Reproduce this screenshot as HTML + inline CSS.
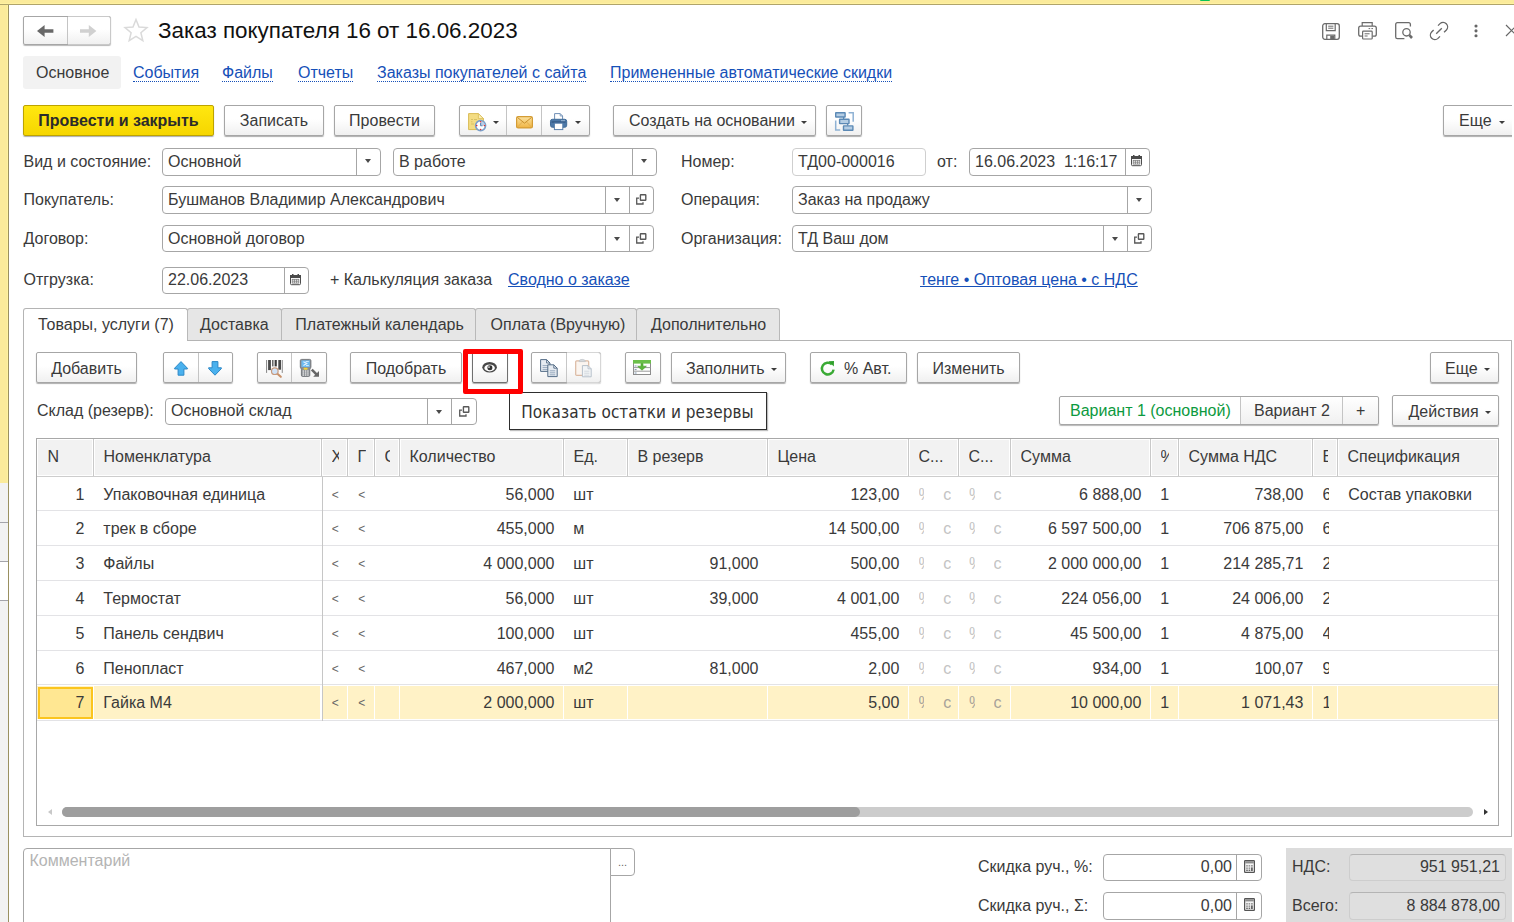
<!DOCTYPE html><html lang="ru"><head><meta charset="utf-8"><title>Заказ покупателя 16 от 16.06.2023</title><style>
*{box-sizing:border-box;margin:0;padding:0}
html,body{width:1514px;height:922px;overflow:hidden;background:#fff}
body{font-family:"Liberation Sans",Arial,sans-serif;font-size:16px;color:#3a3a3a;position:relative}
.a{position:absolute;white-space:nowrap}
.t{position:absolute;white-space:nowrap;line-height:20px;height:20px}
.btn{position:absolute;border:1px solid #a6a6a6;border-radius:2px;background:linear-gradient(#fff 0%,#fff 45%,#f0f0f0 100%);box-shadow:0 1px 1px rgba(0,0,0,.32);text-align:center;white-space:nowrap;color:#3a3a3a}
.btn.y{background:linear-gradient(#ffe710,#f6d600);border-color:#bda300;font-weight:bold;color:#2b2b2b}
.grp{position:absolute;border:1px solid #a6a6a6;border-radius:2px;background:linear-gradient(#fff 0%,#fff 45%,#f0f0f0 100%);box-shadow:0 1px 1px rgba(0,0,0,.28)}
.sep{position:absolute;top:0;bottom:0;width:1px;background:#c4c4c4}
.inp{position:absolute;border:1px solid #a6a6a6;border-radius:4px;background:#fff;white-space:nowrap;overflow:hidden}
.inp .v{position:absolute;left:5px;top:3px;line-height:20px}
.inp .s{position:absolute;top:0;bottom:0;width:1px;background:#a6a6a6}
.lnk{color:#1650b8}
.dot{border-bottom:1px dotted #1650b8}
.car{position:absolute;width:0;height:0;border-left:3.25px solid transparent;border-right:3.25px solid transparent;border-top:4px solid #4a4a4a}
.carb{position:absolute;width:0;height:0;border-left:3px solid transparent;border-right:3px solid transparent;border-top:3px solid #3c3c3c}
svg{position:absolute;overflow:visible}
</style></head><body>
<div class="a" style="left:0;top:0;width:1514px;height:3px;background:#fbeb9b"></div>
<div class="a" style="left:0;top:3px;width:1514px;height:1px;background:#fff1a0"></div>
<div class="a" style="left:0;top:4px;width:1514px;height:1px;background:#b0a46a"></div>
<div class="a" style="left:0;top:5px;width:7px;height:478px;background:#fbeb9b"></div>
<div class="a" style="left:7px;top:5px;width:1px;height:478px;background:#fff3a0"></div>
<div class="a" style="left:0;top:483px;width:8px;height:439px;background:#f2f2f2"></div>
<div class="a" style="left:0;top:562px;width:8px;height:38px;background:#fff"></div>
<div class="a" style="left:0;top:522px;width:8px;height:1px;background:#a4a4aa"></div>
<div class="a" style="left:0;top:561px;width:8px;height:1px;background:#a4a4aa"></div>
<div class="a" style="left:0;top:600px;width:8px;height:1px;background:#a4a4aa"></div>
<div class="a" style="left:8px;top:5px;width:1px;height:917px;background:#9a9060"></div>
<div class="a" style="left:1199.5px;top:0;width:10px;height:1.2px;background:#08c456;border-radius:0 0 4px 4px"></div>
<div class="grp" style="left:23px;top:16px;width:88px;height:29px"><i class="sep" style="left:43px"></i><svg width="16" height="12" style="left:13px;top:8px" viewBox="0 0 16 12"><path d="M0 6 L7.6 0 L7.6 4.3 L16.4 4.3 L16.4 7.7 L7.6 7.7 L7.6 12 Z" fill="#686868"/></svg><svg width="16" height="12" style="left:56px;top:8px" viewBox="0 0 16 12"><path d="M16.4 6 L8.8 0 L8.8 4.3 L0 4.3 L0 7.7 L8.8 7.7 L8.8 12 Z" fill="#d0d0d0"/></svg></div>
<div class="a" style="left:68px;top:16px;width:43px;height:29px;border:1px solid #c9c9c9;border-left:none;border-radius:0 2.5px 2.5px 0"></div>
<svg width="24" height="24" style="left:124px;top:18px" viewBox="0 0 24 24"><path d="M12 1.5 L15 9 L23 9.6 L16.9 14.8 L18.8 22.6 L12 18.4 L5.2 22.6 L7.1 14.8 L1 9.6 L9 9 Z" fill="#fff" stroke="#dadada" stroke-width="1.5" stroke-linejoin="miter"/></svg>
<div class="a" style="left:158px;top:18px;font-size:22.4px;line-height:26px;color:#111">Заказ покупателя 16 от 16.06.2023</div>
<svg width="18" height="17" viewBox="0 0 18 17" style="left:1322px;top:23px"><rect x="0.7" y="0.7" width="16.6" height="15.6" rx="2.2" fill="none" stroke="#6b6b6b" stroke-width="1.3"/><path d="M4.3 0.8 V7.6 H13.2 V0.8" fill="none" stroke="#6b6b6b" stroke-width="1.2"/><path d="M6.2 3.2 H11.4 M6.2 5.2 H11.4" stroke="#6b6b6b" stroke-width="1"/><path d="M4.8 16.2 V12.2 H12.8 V16.2" fill="none" stroke="#6b6b6b" stroke-width="1.2"/><rect x="8.2" y="12.8" width="4" height="3.4" fill="#6b6b6b"/></svg><svg width="18.5" height="17.6" viewBox="0 0 18.5 17.6" style="left:1358px;top:22.2px"><path d="M4.2 4 V0.7 H14.2 V4" fill="none" stroke="#6b6b6b" stroke-width="1.2"/><path d="M4.6 14.2 H2.6 Q0.7 14.2 0.7 12.2 V6.2 Q0.7 4.2 2.6 4.2 H16.4 Q18.3 4.2 18.3 6.2 V12.2 Q18.3 14.2 16.4 14.2 H14.4" fill="none" stroke="#6b6b6b" stroke-width="1.3"/><rect x="4.6" y="9.2" width="9.6" height="7.8" rx="0.8" fill="#fff" stroke="#6b6b6b" stroke-width="1.2"/><path d="M6.6 11.8 H11.6" stroke="#6b6b6b" stroke-width="1"/><path d="M6.6 14 H9.6" stroke="#6b6b6b" stroke-width="1"/><path d="M10.6 6.6 H12.2 M13.4 6.6 H15" stroke="#6b6b6b" stroke-width="1"/></svg><svg width="18" height="17.6" viewBox="0 0 18 17.6" style="left:1395px;top:22.2px"><path d="M15.4 4.6 V2.4 Q15.4 0.7 13.7 0.7 H2.4 Q0.7 0.7 0.7 2.4 V15 Q0.7 16.7 2.4 16.7 H9.4" fill="none" stroke="#6b6b6b" stroke-width="1.3"/><circle cx="11.5" cy="10.3" r="3.7" fill="#fff" stroke="#6b6b6b" stroke-width="1.3"/><path d="M14.4 13.2 L17 16" stroke="#6b6b6b" stroke-width="2.6" stroke-linecap="butt"/></svg><svg width="18" height="18" viewBox="0 0 18 18" style="left:1430px;top:22px"><g fill="none" stroke="#686868" stroke-width="1.35" stroke-linecap="butt"><path d="M8.02 3.62 L10.02 1.62 A4.5 4.5 0 0 1 16.38 7.98 L14.08 10.28"/><path d="M3.62 8.02 L1.62 10.02 A4.5 4.5 0 0 0 7.98 16.38 L9.98 14.38"/><path d="M6.2 11.7 L11.8 6.2"/></g></svg><svg width="4" height="14" viewBox="0 0 4 14" style="left:1473.5px;top:23.6px"><circle cx="2" cy="2" r="1.55" fill="#666"/><circle cx="2" cy="6.85" r="1.55" fill="#666"/><circle cx="2" cy="11.7" r="1.55" fill="#666"/></svg><svg width="11" height="11" viewBox="0 0 11 11" style="left:1506px;top:25px"><path d="M0 0 L11 11 M11 0 L0 11" stroke="#666" stroke-width="1.2"/></svg>
<div class="a" style="left:23px;top:56px;width:98px;height:33px;background:#f2f2f2;border-radius:3px"></div>
<div class="t " style="left:36px;top:63px;">Основное</div>
<div class="t " style="left:133px;top:63px;"><span class="lnk dot">События</span></div>
<div class="t " style="left:222px;top:63px;"><span class="lnk dot">Файлы</span></div>
<div class="t " style="left:298px;top:63px;"><span class="lnk dot">Отчеты</span></div>
<div class="t " style="left:377px;top:63px;"><span class="lnk dot">Заказы покупателей с сайта</span></div>
<div class="t " style="left:610px;top:63px;"><span class="lnk dot">Примененные автоматические скидки</span></div>
<div class="btn y" style="left:23px;top:105px;width:191px;height:31px;line-height:29px;">Провести и закрыть</div>
<div class="btn " style="left:224px;top:105px;width:100px;height:31px;line-height:29px;">Записать</div>
<div class="btn " style="left:334px;top:105px;width:101px;height:31px;line-height:29px;">Провести</div>
<div class="grp" style="left:459px;top:105px;width:131px;height:31px"><i class="sep" style="left:46px"></i><i class="sep" style="left:81px"></i><i class="carb" style="left:33px;top:15px"></i><i class="carb" style="left:115px;top:15px"></i><svg width="18" height="18" viewBox="0 0 18 18" style="left:8px;top:7.2px"><path d="M0.6 0.6 H10.4 L15.4 5.6 V16.6 H0.6 Z" fill="#f3dc83" stroke="#d9bb55" stroke-width="1"/><path d="M10.4 0.6 V5.6 H15.4 Z" fill="#fbefb8" stroke="#d9bb55" stroke-width="0.8"/><path d="M3 6.5h2M6 6.5h3M3 8.8h1.5M3 11h3" stroke="#d5bd62" stroke-width="0.9"/><circle cx="12.6" cy="12.6" r="5" fill="#fff" stroke="#7a9fca" stroke-width="1.6"/><path d="M12.6 12.6 V8.4 A4.2 4.2 0 0 1 16.8 12.6 Z" fill="#b9cde6"/><path d="M12.6 12.8 V10 M12.6 12.8 H14.6" stroke="#5c84b5" stroke-width="1.1" fill="none"/><circle cx="12.6" cy="8.7" r="0.8" fill="#e03030"/><circle cx="12.6" cy="16.5" r="0.8" fill="#e03030"/><circle cx="8.7" cy="12.6" r="0.8" fill="#e03030"/><circle cx="16.5" cy="12.6" r="0.8" fill="#e03030"/></svg><svg width="17" height="12.5" viewBox="0 0 17 12.5" style="left:56.3px;top:9.5px"><defs><linearGradient id="mg" x1="0" y1="0" x2="0" y2="1"><stop offset="0" stop-color="#fbe2a0"/><stop offset="1" stop-color="#f0b442"/></linearGradient></defs><rect x="0.6" y="0.6" width="15.8" height="11.3" rx="1.5" fill="url(#mg)" stroke="#d49c34" stroke-width="1.2"/><path d="M1.4 1.4 L8.5 7.2 L15.6 1.4" fill="none" stroke="#c98f2b" stroke-width="1"/><path d="M1.4 11.2 L6.4 6 M15.6 11.2 L10.6 6" fill="none" stroke="#e0ab4a" stroke-width="0.9"/></svg><svg width="17.2" height="17.2" viewBox="0 0 17.2 17.2" style="left:89.8px;top:7.2px"><path d="M4.6 6.4 V0.6 H10.2 L12.6 3 V6.4" fill="#fff" stroke="#6f8fb5" stroke-width="1"/><path d="M10.2 0.6 V3 H12.6" fill="none" stroke="#6f8fb5" stroke-width="0.8"/><rect x="0.5" y="6.3" width="16.2" height="8" rx="2" fill="#4c78a8" stroke="#3f6a98" stroke-width="1"/><rect x="1.6" y="8.4" width="14" height="1.2" fill="#2f557f"/><rect x="11.4" y="7.2" width="1.2" height="1" fill="#cfe0f2"/><rect x="13.4" y="7.2" width="1.2" height="1" fill="#cfe0f2"/><rect x="4.4" y="10.2" width="8.4" height="6.4" fill="#fff" stroke="#5a80ad" stroke-width="1"/></svg></div>
<div class="btn " style="left:613px;top:105px;width:203px;height:31px;line-height:29px;text-align:left;padding-left:15px">Создать на основании<i class="carb" style="left:187px;top:15px"></i></div>
<div class="btn " style="left:826px;top:105px;width:36px;height:31px;line-height:29px;"><svg width="19" height="19" viewBox="0 0 19 19" style="left:8.2px;top:6.2px"><path d="M13.6 0.7 H18.2 V9.8" fill="none" stroke="#8fb2d4" stroke-width="1.5"/><path d="M0.7 8.4 V18 H5.2" fill="none" stroke="#8fb2d4" stroke-width="1.5"/><path d="M8.6 5 V7 M12.6 11.6 V13.6" stroke="#5b89b5" stroke-width="1.3"/><rect x="0.7" y="0.7" width="9.4" height="4.3" rx="0.3" fill="#b4cde4" stroke="#5b89b5" stroke-width="1.4"/><rect x="4.6" y="7.3" width="9.4" height="4.3" rx="0.3" fill="#b4cde4" stroke="#5b89b5" stroke-width="1.4"/><rect x="8.5" y="13.9" width="9.4" height="4.3" rx="0.3" fill="#b4cde4" stroke="#5b89b5" stroke-width="1.4"/></svg></div>
<div class="btn " style="left:1443px;top:105px;width:80px;height:31px;line-height:29px;text-align:left;padding-left:15px">Еще<i class="carb" style="left:55px;top:15px"></i></div>
<div class="a" style="left:1512px;top:95px;width:2px;height:827px;background:#fff"></div>
<div class="t " style="left:23.5px;top:152px;">Вид и состояние:</div>
<div class="inp" style="left:162px;top:148px;width:219px;height:28px;"><span class="v" style="">Основной</span><i class="s" style="left:193px"></i><i class="car" style="left:202.25px;top:10px"></i></div>
<div class="inp" style="left:393px;top:148px;width:264px;height:28px;"><span class="v" style="">В работе</span><i class="s" style="left:238px"></i><i class="car" style="left:247.25px;top:10px"></i></div>
<div class="t " style="left:681px;top:152px;">Номер:</div>
<div class="inp" style="left:792px;top:148px;width:134px;height:28px;border-color:#cfcfcf"><span class="v" style="">ТД00-000016</span></div>
<div class="t " style="left:937px;top:152px;">от:</div>
<div class="inp" style="left:969px;top:148px;width:181px;height:28px;"><span class="v" style="">16.06.2023&nbsp; 1:16:17</span><i class="s" style="left:155px"></i><svg width="11" height="11.2" viewBox="0 0 11 11.2" style="left:160.7px;top:5.8px"><rect x="0.5" y="1.5" width="10" height="9.2" rx="1" fill="#fff" stroke="#4a4a4a"/><rect x="0" y="1" width="11" height="3" fill="#4a4a4a"/><rect x="2" y="0" width="1.5" height="2" fill="#4a4a4a"/><rect x="7.5" y="0" width="1.5" height="2" fill="#4a4a4a"/><rect x="2.2" y="5.3" width="6.6" height="3.8" fill="none" stroke="#7a7a7a" stroke-width="0.8"/><path d="M4.4 5.3v3.8M6.6 5.3v3.8M2.2 7.2h6.6" stroke="#7a7a7a" stroke-width="0.8" fill="none"/></svg></div>
<div class="t " style="left:23.5px;top:190px;">Покупатель:</div>
<div class="inp" style="left:162px;top:186px;width:492px;height:28px;"><span class="v" style="">Бушманов Владимир Александрович</span><i class="s" style="left:442px"></i><i class="car" style="left:451.25px;top:11px"></i><i class="s" style="left:466px"></i><svg width="10.5" height="10.7" viewBox="0 0 10.5 10.7" style="left:473.2px;top:7px"><path d="M3 4.1 H0.7 V10 H7 V8.2" fill="none" stroke="#585858" stroke-width="1.3"/><rect x="4.4" y="0.7" width="5.4" height="5.6" rx="0.5" fill="none" stroke="#585858" stroke-width="1.4"/></svg></div>
<div class="t " style="left:681px;top:190px;">Операция:</div>
<div class="inp" style="left:792px;top:186px;width:360px;height:28px;"><span class="v" style="">Заказ на продажу</span><i class="s" style="left:334px"></i><i class="car" style="left:343.25px;top:11px"></i></div>
<div class="t " style="left:23.5px;top:229px;">Договор:</div>
<div class="inp" style="left:162px;top:225px;width:492px;height:27px;"><span class="v" style="">Основной договор</span><i class="s" style="left:442px"></i><i class="car" style="left:451.25px;top:11px"></i><i class="s" style="left:466px"></i><svg width="10.5" height="10.7" viewBox="0 0 10.5 10.7" style="left:473.2px;top:7px"><path d="M3 4.1 H0.7 V10 H7 V8.2" fill="none" stroke="#585858" stroke-width="1.3"/><rect x="4.4" y="0.7" width="5.4" height="5.6" rx="0.5" fill="none" stroke="#585858" stroke-width="1.4"/></svg></div>
<div class="t " style="left:681px;top:229px;">Организация:</div>
<div class="inp" style="left:792px;top:225px;width:360px;height:27px;"><span class="v" style="">ТД Ваш дом</span><i class="s" style="left:310px"></i><i class="car" style="left:319.25px;top:11px"></i><i class="s" style="left:334px"></i><svg width="10.5" height="10.7" viewBox="0 0 10.5 10.7" style="left:341.2px;top:7px"><path d="M3 4.1 H0.7 V10 H7 V8.2" fill="none" stroke="#585858" stroke-width="1.3"/><rect x="4.4" y="0.7" width="5.4" height="5.6" rx="0.5" fill="none" stroke="#585858" stroke-width="1.4"/></svg></div>
<div class="t " style="left:23.5px;top:270px;">Отгрузка:</div>
<div class="inp" style="left:162px;top:267px;width:147px;height:27px;"><span class="v" style="top:2px">22.06.2023</span><i class="s" style="left:121px"></i><svg width="11" height="11.2" viewBox="0 0 11 11.2" style="left:126.7px;top:5.8px"><rect x="0.5" y="1.5" width="10" height="9.2" rx="1" fill="#fff" stroke="#4a4a4a"/><rect x="0" y="1" width="11" height="3" fill="#4a4a4a"/><rect x="2" y="0" width="1.5" height="2" fill="#4a4a4a"/><rect x="7.5" y="0" width="1.5" height="2" fill="#4a4a4a"/><rect x="2.2" y="5.3" width="6.6" height="3.8" fill="none" stroke="#7a7a7a" stroke-width="0.8"/><path d="M4.4 5.3v3.8M6.6 5.3v3.8M2.2 7.2h6.6" stroke="#7a7a7a" stroke-width="0.8" fill="none"/></svg></div>
<div class="t " style="left:330px;top:270px;">+ Калькуляция заказа</div>
<div class="t " style="left:508px;top:270px;"><span class="lnk" style="text-decoration:underline">Сводно о заказе</span></div>
<div class="t " style="left:920px;top:270px;"><span class="lnk" style="text-decoration:underline">тенге • Оптовая цена • с НДС</span></div>
<div class="a" style="left:23px;top:340px;width:1489px;height:497px;border:1px solid #b4b4b4"></div>
<div class="a" style="left:23px;top:308px;width:165px;height:33px;border:1px solid #b4b4b4;border-bottom:none;border-radius:3px 3px 0 0;background:#fff"></div>
<div class="t " style="left:38px;top:315px;">Товары, услуги (7)</div>
<div class="a" style="left:187px;top:308px;width:95px;height:32px;border:1px solid #b9b9b9;border-bottom:none;border-radius:3px 3px 0 0;background:#e6e6e6"></div>
<div class="t " style="left:200px;top:315px;">Доставка</div>
<div class="a" style="left:281px;top:308px;width:195px;height:32px;border:1px solid #b9b9b9;border-bottom:none;border-radius:3px 3px 0 0;background:#e6e6e6"></div>
<div class="t " style="left:295.3px;top:315px;">Платежный календарь</div>
<div class="a" style="left:475px;top:308px;width:162px;height:32px;border:1px solid #b9b9b9;border-bottom:none;border-radius:3px 3px 0 0;background:#e6e6e6"></div>
<div class="t " style="left:490.6px;top:315px;">Оплата (Вручную)</div>
<div class="a" style="left:636px;top:308px;width:144px;height:32px;border:1px solid #b9b9b9;border-bottom:none;border-radius:3px 3px 0 0;background:#e6e6e6"></div>
<div class="t " style="left:651px;top:315px;">Дополнительно</div>
<div class="btn " style="left:36px;top:352px;width:101px;height:31px;line-height:31px;">Добавить</div>
<div class="grp" style="left:163px;top:352px;width:70px;height:31px"><i class="sep" style="left:34px"></i><svg width="14" height="14.8" viewBox="0 0 14 14.8" style="left:9.8px;top:8.3px"><path d="M7 0.6 L13.4 7.2 L13.4 8 H9.9 V14.2 H4.1 V8 H0.6 V7.2 Z" fill="#4ab1ee" stroke="#2c88c6" stroke-width="1" stroke-linejoin="round"/></svg><svg width="14" height="14.8" viewBox="0 0 14 14.8" style="left:43.85px;top:8.3px"><path d="M7 14.2 L13.4 7.6 V6.8 H9.9 V0.6 H4.1 V6.8 H0.6 V7.6 Z" fill="#4ab1ee" stroke="#2c88c6" stroke-width="1" stroke-linejoin="round"/></svg></div>
<div class="grp" style="left:257px;top:352px;width:70px;height:31px"><i class="sep" style="left:33px"></i><svg width="17" height="19" viewBox="0 0 17 19" style="left:8px;top:7.2px"><rect x="0" y="0" width="1.1" height="12.9" fill="#8f8f8f"/><rect x="2.1" y="0" width="2.8" height="10.1" fill="#4a4a4a"/><rect x="6.1" y="0" width="1.4" height="6.4" fill="#5a5a5a"/><rect x="8.6" y="0" width="2.2" height="6.4" fill="#3c3c3c"/><rect x="12.3" y="0" width="2.7" height="9.7" fill="#4a4a4a"/><rect x="15.7" y="0" width="1.3" height="12.9" fill="#a4a4a4"/><path d="M11.4 13.8 L14.8 16.8" stroke="#c8916a" stroke-width="2.1" stroke-linecap="round"/><circle cx="8.8" cy="11.2" r="3.3" fill="#cfe2f7" stroke="#c79a7e" stroke-width="1.2"/></svg><svg width="19" height="18" viewBox="0 0 19 18" style="left:41.8px;top:6px"><path d="M0.3 1.6 Q0.3 0.4 1.6 0.4 H9.6 Q10.9 0.4 10.9 1.6 V8.2 L9.8 10.2 V16.2 Q9.8 17.4 8.6 17.4 H2.6 Q1.4 17.4 1.4 16.2 V10.2 L0.3 8.2 Z" fill="#8b8f94" stroke="#6d7176" stroke-width="0.9"/><rect x="1.4" y="1.4" width="8.4" height="6.6" fill="#6cbaf0"/><path d="M3.4 2.8 L6.8 4.6 L3.4 6.4" fill="none" stroke="#e6f3ff" stroke-width="1.1"/><path d="M5.6 2.6 H8.8 M6 6.6 H8.8" stroke="#e6f3ff" stroke-width="0.9"/><rect x="3.6" y="8.8" width="4" height="1.9" rx="0.6" fill="#f0d23c"/><g fill="#e8e8e8"><rect x="2.6" y="11.4" width="1.4" height="1.3"/><rect x="4.9" y="11.4" width="1.4" height="1.3"/><rect x="7.2" y="11.4" width="1.4" height="1.3"/><rect x="2.6" y="13.4" width="1.4" height="1.3"/><rect x="4.9" y="13.4" width="1.4" height="1.3"/><rect x="7.2" y="13.4" width="1.4" height="1.3"/><rect x="2.6" y="15.4" width="1.4" height="1.3"/><rect x="4.9" y="15.4" width="1.4" height="1.3"/><rect x="7.2" y="15.4" width="1.4" height="1.3"/></g><path d="M11.8 10.6 L17 15.8" stroke="#666" stroke-width="2.6"/><path d="M19 17.8 V12 L13.2 17.8 Z" fill="#666"/></svg></div>
<div class="btn " style="left:350px;top:352px;width:112px;height:31px;line-height:31px;">Подобрать</div>
<div class="btn " style="left:472px;top:352px;width:36px;height:31px;line-height:31px;border-color:#707070"><svg width="15.2" height="10.6" viewBox="0 0 15.2 10.6" style="left:9.2px;top:9.3px"><ellipse cx="7.6" cy="5.3" rx="7.3" ry="5.3" fill="#484848"/><ellipse cx="7.6" cy="5.9" rx="5.3" ry="3.5" fill="#fff"/><circle cx="7.9" cy="5.8" r="2.5" fill="#333"/><circle cx="7" cy="5.1" r="0.9" fill="#e8e8e8"/></svg></div>
<div class="grp" style="left:531px;top:352px;width:70px;height:31px"><i class="sep" style="left:34px"></i><svg width="18" height="18.5" viewBox="0 0 18 18.5" style="left:7.8px;top:6px"><path d="M0.6 0.6 h6 l3.4 3.4 v8.4 h-9.4 z" fill="#e6ebf1" stroke="#566e88" stroke-width="1"/><path d="M6.6 0.6 v3.4 h3.4" fill="none" stroke="#566e88" stroke-width="0.9"/><path d="M2.6 6.6 h5.4 M2.6 8.6 h5.4 M2.6 10.6 h5.4" stroke="#8fa3b8" stroke-width="0.9"/><path d="M7.8 5.8 h6 l3.4 3.4 v8.4 h-9.4 z" fill="#e6ebf1" stroke="#566e88" stroke-width="1"/><path d="M13.8 5.8 v3.4 h3.4" fill="none" stroke="#566e88" stroke-width="0.9"/><path d="M9.8 11.8 h5.4 M9.8 13.8 h5.4 M9.8 15.8 h5.4" stroke="#8fa3b8" stroke-width="0.9"/></svg><svg width="17" height="18.5" viewBox="0 0 17 18.5" style="left:43px;top:6px"><rect x="0.7" y="1.8" width="13" height="14.6" rx="1" fill="#fbf5f0" stroke="#dbb9a2" stroke-width="1.2"/><path d="M4 2.6 Q4 0.4 7.2 0.4 Q10.4 0.4 10.4 2.6 Z" fill="#d6d9dc" stroke="#c1c5c9" stroke-width="0.8"/><path d="M7.4 6.6 h5.6 l3.2 3.2 v8 h-8.8 z" fill="#f3f5f7" stroke="#b7c1cb" stroke-width="1"/><path d="M13 6.6 v3.2 h3.2" fill="none" stroke="#b7c1cb" stroke-width="0.9"/><path d="M9.2 12.2 h5.2 M9.2 14.2 h5.2 M9.2 16.2 h5.2" stroke="#cfd6dd" stroke-width="0.9"/></svg></div>
<div class="a" style="left:567px;top:352px;width:34px;height:31px;border:1px solid #d6d6d6;border-left:none;border-radius:0 3px 3px 0;box-shadow:0 1px 1px rgba(255,255,255,.6)"></div>
<div class="btn " style="left:625px;top:352px;width:36px;height:31px;line-height:31px;"><svg width="18" height="15" viewBox="0 0 18 15" style="left:7px;top:7.4px"><rect x="0.5" y="0.5" width="17" height="14" fill="#fff" stroke="#8c8c8c" stroke-width="1"/><rect x="0" y="0" width="18" height="3.6" fill="#6bbf4a"/><path d="M0.5 7.6 H17.5 M0.5 11.2 H17.5" stroke="#9a9a9a" stroke-width="1"/><path d="M1.6 6 h2 M1.6 9.6 h2 M1.6 13 h2" stroke="#7f96ad" stroke-width="1"/><path d="M8 3.6 h2 v2.6 h3.4 L9 10.2 L4.6 6.2 H8 Z" fill="#5cb63c" stroke="#4aa02e" stroke-width="0.6"/></svg></div>
<div class="btn " style="left:671px;top:352px;width:115px;height:31px;line-height:31px;text-align:left;padding-left:14px">Заполнить<i class="carb" style="left:99px;top:15px"></i></div>
<div class="btn " style="left:810px;top:352px;width:97px;height:31px;line-height:31px;text-align:left;padding-left:33px"><svg width="15" height="15" viewBox="0 0 15 15" style="left:9px;top:8.2px"><path d="M11.9 3.3 A5.9 5.9 0 1 0 13.6 8.6" fill="none" stroke="#3aaa35" stroke-width="2.5" stroke-linecap="butt"/><path d="M8.6 0.2 L14 0 L13.8 5.6 Z" fill="#2fa02b"/></svg>% Авт.</div>
<div class="btn " style="left:917px;top:352px;width:103px;height:31px;line-height:31px;">Изменить</div>
<div class="btn " style="left:1430px;top:352px;width:69px;height:31px;line-height:31px;text-align:left;padding-left:14px">Еще<i class="carb" style="left:53px;top:15px"></i></div>
<div class="t " style="left:37px;top:401px;">Склад (резерв):</div>
<div class="inp" style="left:165px;top:398px;width:312px;height:27px;"><span class="v" style="top:2px">Основной склад</span><i class="s" style="left:261px"></i><i class="car" style="left:270.25px;top:11px"></i><i class="s" style="left:285px"></i><svg width="10.5" height="10.7" viewBox="0 0 10.5 10.7" style="left:292.7px;top:7px"><path d="M3 4.1 H0.7 V10 H7 V8.2" fill="none" stroke="#585858" stroke-width="1.3"/><rect x="4.4" y="0.7" width="5.4" height="5.6" rx="0.5" fill="none" stroke="#585858" stroke-width="1.4"/></svg></div>
<div class="grp" style="left:1059px;top:396px;width:320px;height:29px;background:linear-gradient(#fff,#f0f0f0)"><div class="a" style="left:0;top:0;width:180px;height:27px;background:#fff;border-radius:3px 0 0 3px"></div><i class="sep" style="left:180px"></i><i class="sep" style="left:282px"></i><div class="a" style="left:10px;top:0;line-height:27px;color:#0c9a40">Вариант 1 (основной)</div><div class="a" style="left:194px;top:0;line-height:27px">Вариант 2</div><div class="a" style="left:296px;top:0;line-height:27px">+</div></div>
<div class="btn " style="left:1392px;top:395px;width:107px;height:31px;line-height:31px;text-align:left;padding-left:15.5px">Действия<i class="carb" style="left:92px;top:15px"></i></div>
<div class="a" style="left:509px;top:392px;width:258px;height:38px;border:1px solid #2e2e2e;background:#fff;box-shadow:1px 1px 1px rgba(0,0,0,.25)"></div>
<div class="a" style="left:521.3px;top:402px;line-height:20px;font-size:17px;letter-spacing:0.05px;color:#333;font-family:'DejaVu Sans Condensed','DejaVu Sans','Liberation Sans',sans-serif">Показать остатки и резервы</div>
<div class="a" style="left:463px;top:349px;width:60px;height:45px;border:5px solid #ff0000;border-radius:2px"></div>
<div class="a" style="left:36px;top:438px;width:1463px;height:388px;border:1px solid #a8a8a8;background:#fff"></div>
<div class="a" style="left:37px;top:476px;width:1461px;height:1px;background:#cdcdcd"></div>
<div class="a" style="left:37px;top:439px;width:56px;height:37px;background:#f2f2f2;border:1px solid #fff"></div>
<div class="a" style="left:94px;top:439px;width:227px;height:37px;background:#f2f2f2;border:1px solid #fff"></div>
<div class="a" style="left:322px;top:439px;width:25px;height:37px;background:#f2f2f2;border:1px solid #fff"></div>
<div class="a" style="left:348px;top:439px;width:26px;height:37px;background:#f2f2f2;border:1px solid #fff"></div>
<div class="a" style="left:375px;top:439px;width:24px;height:37px;background:#f2f2f2;border:1px solid #fff"></div>
<div class="a" style="left:400px;top:439px;width:163px;height:37px;background:#f2f2f2;border:1px solid #fff"></div>
<div class="a" style="left:564px;top:439px;width:63px;height:37px;background:#f2f2f2;border:1px solid #fff"></div>
<div class="a" style="left:628px;top:439px;width:139px;height:37px;background:#f2f2f2;border:1px solid #fff"></div>
<div class="a" style="left:768px;top:439px;width:140px;height:37px;background:#f2f2f2;border:1px solid #fff"></div>
<div class="a" style="left:909px;top:439px;width:49px;height:37px;background:#f2f2f2;border:1px solid #fff"></div>
<div class="a" style="left:959px;top:439px;width:51px;height:37px;background:#f2f2f2;border:1px solid #fff"></div>
<div class="a" style="left:1011px;top:439px;width:139px;height:37px;background:#f2f2f2;border:1px solid #fff"></div>
<div class="a" style="left:1151px;top:439px;width:27px;height:37px;background:#f2f2f2;border:1px solid #fff"></div>
<div class="a" style="left:1179px;top:439px;width:133px;height:37px;background:#f2f2f2;border:1px solid #fff"></div>
<div class="a" style="left:1313px;top:439px;width:24px;height:37px;background:#f2f2f2;border:1px solid #fff"></div>
<div class="a" style="left:1338px;top:439px;width:160px;height:37px;background:#f2f2f2;border:1px solid #fff"></div>
<div class="a" style="left:93px;top:439px;width:1px;height:37px;background:#c9c9c9"></div>
<div class="a" style="left:321px;top:439px;width:1px;height:37px;background:#c9c9c9"></div>
<div class="a" style="left:347px;top:439px;width:1px;height:37px;background:#c9c9c9"></div>
<div class="a" style="left:374px;top:439px;width:1px;height:37px;background:#c9c9c9"></div>
<div class="a" style="left:399px;top:439px;width:1px;height:37px;background:#c9c9c9"></div>
<div class="a" style="left:563px;top:439px;width:1px;height:37px;background:#c9c9c9"></div>
<div class="a" style="left:627px;top:439px;width:1px;height:37px;background:#c9c9c9"></div>
<div class="a" style="left:767px;top:439px;width:1px;height:37px;background:#c9c9c9"></div>
<div class="a" style="left:908px;top:439px;width:1px;height:37px;background:#c9c9c9"></div>
<div class="a" style="left:958px;top:439px;width:1px;height:37px;background:#c9c9c9"></div>
<div class="a" style="left:1010px;top:439px;width:1px;height:37px;background:#c9c9c9"></div>
<div class="a" style="left:1150px;top:439px;width:1px;height:37px;background:#c9c9c9"></div>
<div class="a" style="left:1178px;top:439px;width:1px;height:37px;background:#c9c9c9"></div>
<div class="a" style="left:1312px;top:439px;width:1px;height:37px;background:#c9c9c9"></div>
<div class="a" style="left:1337px;top:439px;width:1px;height:37px;background:#c9c9c9"></div>
<div class="t" style="left:47.6px;top:447px;width:45px;overflow:hidden">N</div>
<div class="t" style="left:103.5px;top:447px;width:216px;overflow:hidden">Номенклатура</div>
<div class="t" style="left:331.5px;top:447px;width:7.4px;overflow:hidden">Х</div>
<div class="t" style="left:357.5px;top:447px;width:8px;overflow:hidden">Г</div>
<div class="t" style="left:384.5px;top:447px;width:5px;overflow:hidden">С</div>
<div class="t" style="left:409.5px;top:447px;width:152px;overflow:hidden">Количество</div>
<div class="t" style="left:573.5px;top:447px;width:52px;overflow:hidden">Ед.</div>
<div class="t" style="left:637.5px;top:447px;width:128px;overflow:hidden">В резерв</div>
<div class="t" style="left:777.5px;top:447px;width:129px;overflow:hidden">Цена</div>
<div class="t" style="left:918.5px;top:447px;width:38px;overflow:hidden">С...</div>
<div class="t" style="left:968.5px;top:447px;width:40px;overflow:hidden">С...</div>
<div class="t" style="left:1020.5px;top:447px;width:128px;overflow:hidden">Сумма</div>
<div class="t" style="left:1160.5px;top:447px;width:8px;overflow:hidden">%</div>
<div class="t" style="left:1188.5px;top:447px;width:122px;overflow:hidden">Сумма НДС</div>
<div class="t" style="left:1322.5px;top:447px;width:5px;overflow:hidden">Е</div>
<div class="t" style="left:1347.5px;top:447px;width:149px;overflow:hidden">Спецификация</div>
<div class="a" style="left:37px;top:510px;width:1461px;height:1px;background:#e3e3e6"></div>
<div class="t" style="left:36px;top:485px;width:48.5px;text-align:right;">1</div>
<div class="t" style="left:103.3px;top:485px;width:217px;overflow:hidden;">Упаковочная единица</div>
<div class="t" style="left:331.8px;top:485px;font-size:12px;line-height:21px;color:#666">&lt;</div>
<div class="t" style="left:358.2px;top:485px;font-size:12px;line-height:21px;color:#666">&lt;</div>
<div class="t" style="left:399px;top:485px;width:155.5px;text-align:right;">56,000</div>
<div class="t" style="left:573.3px;top:485px;width:53px;overflow:hidden;">шт</div>
<div class="t" style="left:627px;top:485px;width:131.5px;text-align:right;"></div>
<div class="t" style="left:767px;top:485px;width:132.4px;text-align:right;">123,00</div>
<div class="t" style="left:918.5px;top:485px;width:5.8px;overflow:hidden;color:#c4c4c4">%</div>
<div class="t" style="left:943.3px;top:485px;width:8px;overflow:hidden;color:#c4c4c4">с</div>
<div class="t" style="left:969px;top:485px;width:5.8px;overflow:hidden;color:#c4c4c4">%</div>
<div class="t" style="left:993.6px;top:485px;width:8px;overflow:hidden;color:#c4c4c4">с</div>
<div class="t" style="left:1010px;top:485px;width:131.4px;text-align:right;">6 888,00</div>
<div class="t" style="left:1160.3px;top:485px;width:17px;overflow:hidden;">1</div>
<div class="t" style="left:1178px;top:485px;width:125.4px;text-align:right;">738,00</div>
<div class="t" style="left:1322.6px;top:485px;width:6.2px;overflow:hidden">6</div>
<div class="t" style="left:1348.3px;top:485px;width:150px;overflow:hidden;">Состав упаковки</div>
<div class="a" style="left:37px;top:545px;width:1461px;height:1px;background:#e3e3e6"></div>
<div class="t" style="left:36px;top:519px;width:48.5px;text-align:right;">2</div>
<div class="t" style="left:103.3px;top:519px;width:217px;overflow:hidden;">трек в сборе</div>
<div class="t" style="left:331.8px;top:519px;font-size:12px;line-height:21px;color:#666">&lt;</div>
<div class="t" style="left:358.2px;top:519px;font-size:12px;line-height:21px;color:#666">&lt;</div>
<div class="t" style="left:399px;top:519px;width:155.5px;text-align:right;">455,000</div>
<div class="t" style="left:573.3px;top:519px;width:53px;overflow:hidden;">м</div>
<div class="t" style="left:627px;top:519px;width:131.5px;text-align:right;"></div>
<div class="t" style="left:767px;top:519px;width:132.4px;text-align:right;">14 500,00</div>
<div class="t" style="left:918.5px;top:519px;width:5.8px;overflow:hidden;color:#c4c4c4">%</div>
<div class="t" style="left:943.3px;top:519px;width:8px;overflow:hidden;color:#c4c4c4">с</div>
<div class="t" style="left:969px;top:519px;width:5.8px;overflow:hidden;color:#c4c4c4">%</div>
<div class="t" style="left:993.6px;top:519px;width:8px;overflow:hidden;color:#c4c4c4">с</div>
<div class="t" style="left:1010px;top:519px;width:131.4px;text-align:right;">6 597 500,00</div>
<div class="t" style="left:1160.3px;top:519px;width:17px;overflow:hidden;">1</div>
<div class="t" style="left:1178px;top:519px;width:125.4px;text-align:right;">706 875,00</div>
<div class="t" style="left:1322.6px;top:519px;width:6.2px;overflow:hidden">6</div>
<div class="t" style="left:1348.3px;top:519px;width:150px;overflow:hidden;"></div>
<div class="a" style="left:37px;top:580px;width:1461px;height:1px;background:#e3e3e6"></div>
<div class="t" style="left:36px;top:554px;width:48.5px;text-align:right;">3</div>
<div class="t" style="left:103.3px;top:554px;width:217px;overflow:hidden;">Файлы</div>
<div class="t" style="left:331.8px;top:554px;font-size:12px;line-height:21px;color:#666">&lt;</div>
<div class="t" style="left:358.2px;top:554px;font-size:12px;line-height:21px;color:#666">&lt;</div>
<div class="t" style="left:399px;top:554px;width:155.5px;text-align:right;">4 000,000</div>
<div class="t" style="left:573.3px;top:554px;width:53px;overflow:hidden;">шт</div>
<div class="t" style="left:627px;top:554px;width:131.5px;text-align:right;">91,000</div>
<div class="t" style="left:767px;top:554px;width:132.4px;text-align:right;">500,00</div>
<div class="t" style="left:918.5px;top:554px;width:5.8px;overflow:hidden;color:#c4c4c4">%</div>
<div class="t" style="left:943.3px;top:554px;width:8px;overflow:hidden;color:#c4c4c4">с</div>
<div class="t" style="left:969px;top:554px;width:5.8px;overflow:hidden;color:#c4c4c4">%</div>
<div class="t" style="left:993.6px;top:554px;width:8px;overflow:hidden;color:#c4c4c4">с</div>
<div class="t" style="left:1010px;top:554px;width:131.4px;text-align:right;">2 000 000,00</div>
<div class="t" style="left:1160.3px;top:554px;width:17px;overflow:hidden;">1</div>
<div class="t" style="left:1178px;top:554px;width:125.4px;text-align:right;">214 285,71</div>
<div class="t" style="left:1322.6px;top:554px;width:6.2px;overflow:hidden">2</div>
<div class="t" style="left:1348.3px;top:554px;width:150px;overflow:hidden;"></div>
<div class="a" style="left:37px;top:615px;width:1461px;height:1px;background:#e3e3e6"></div>
<div class="t" style="left:36px;top:589px;width:48.5px;text-align:right;">4</div>
<div class="t" style="left:103.3px;top:589px;width:217px;overflow:hidden;">Термостат</div>
<div class="t" style="left:331.8px;top:589px;font-size:12px;line-height:21px;color:#666">&lt;</div>
<div class="t" style="left:358.2px;top:589px;font-size:12px;line-height:21px;color:#666">&lt;</div>
<div class="t" style="left:399px;top:589px;width:155.5px;text-align:right;">56,000</div>
<div class="t" style="left:573.3px;top:589px;width:53px;overflow:hidden;">шт</div>
<div class="t" style="left:627px;top:589px;width:131.5px;text-align:right;">39,000</div>
<div class="t" style="left:767px;top:589px;width:132.4px;text-align:right;">4 001,00</div>
<div class="t" style="left:918.5px;top:589px;width:5.8px;overflow:hidden;color:#c4c4c4">%</div>
<div class="t" style="left:943.3px;top:589px;width:8px;overflow:hidden;color:#c4c4c4">с</div>
<div class="t" style="left:969px;top:589px;width:5.8px;overflow:hidden;color:#c4c4c4">%</div>
<div class="t" style="left:993.6px;top:589px;width:8px;overflow:hidden;color:#c4c4c4">с</div>
<div class="t" style="left:1010px;top:589px;width:131.4px;text-align:right;">224 056,00</div>
<div class="t" style="left:1160.3px;top:589px;width:17px;overflow:hidden;">1</div>
<div class="t" style="left:1178px;top:589px;width:125.4px;text-align:right;">24 006,00</div>
<div class="t" style="left:1322.6px;top:589px;width:6.2px;overflow:hidden">2</div>
<div class="t" style="left:1348.3px;top:589px;width:150px;overflow:hidden;"></div>
<div class="a" style="left:37px;top:650px;width:1461px;height:1px;background:#e3e3e6"></div>
<div class="t" style="left:36px;top:624px;width:48.5px;text-align:right;">5</div>
<div class="t" style="left:103.3px;top:624px;width:217px;overflow:hidden;">Панель сендвич</div>
<div class="t" style="left:331.8px;top:624px;font-size:12px;line-height:21px;color:#666">&lt;</div>
<div class="t" style="left:358.2px;top:624px;font-size:12px;line-height:21px;color:#666">&lt;</div>
<div class="t" style="left:399px;top:624px;width:155.5px;text-align:right;">100,000</div>
<div class="t" style="left:573.3px;top:624px;width:53px;overflow:hidden;">шт</div>
<div class="t" style="left:627px;top:624px;width:131.5px;text-align:right;"></div>
<div class="t" style="left:767px;top:624px;width:132.4px;text-align:right;">455,00</div>
<div class="t" style="left:918.5px;top:624px;width:5.8px;overflow:hidden;color:#c4c4c4">%</div>
<div class="t" style="left:943.3px;top:624px;width:8px;overflow:hidden;color:#c4c4c4">с</div>
<div class="t" style="left:969px;top:624px;width:5.8px;overflow:hidden;color:#c4c4c4">%</div>
<div class="t" style="left:993.6px;top:624px;width:8px;overflow:hidden;color:#c4c4c4">с</div>
<div class="t" style="left:1010px;top:624px;width:131.4px;text-align:right;">45 500,00</div>
<div class="t" style="left:1160.3px;top:624px;width:17px;overflow:hidden;">1</div>
<div class="t" style="left:1178px;top:624px;width:125.4px;text-align:right;">4 875,00</div>
<div class="t" style="left:1322.6px;top:624px;width:6.2px;overflow:hidden">4</div>
<div class="t" style="left:1348.3px;top:624px;width:150px;overflow:hidden;"></div>
<div class="a" style="left:37px;top:684px;width:1461px;height:1px;background:#e3e3e6"></div>
<div class="t" style="left:36px;top:659px;width:48.5px;text-align:right;">6</div>
<div class="t" style="left:103.3px;top:659px;width:217px;overflow:hidden;">Пенопласт</div>
<div class="t" style="left:331.8px;top:659px;font-size:12px;line-height:21px;color:#666">&lt;</div>
<div class="t" style="left:358.2px;top:659px;font-size:12px;line-height:21px;color:#666">&lt;</div>
<div class="t" style="left:399px;top:659px;width:155.5px;text-align:right;">467,000</div>
<div class="t" style="left:573.3px;top:659px;width:53px;overflow:hidden;">м2</div>
<div class="t" style="left:627px;top:659px;width:131.5px;text-align:right;">81,000</div>
<div class="t" style="left:767px;top:659px;width:132.4px;text-align:right;">2,00</div>
<div class="t" style="left:918.5px;top:659px;width:5.8px;overflow:hidden;color:#c4c4c4">%</div>
<div class="t" style="left:943.3px;top:659px;width:8px;overflow:hidden;color:#c4c4c4">с</div>
<div class="t" style="left:969px;top:659px;width:5.8px;overflow:hidden;color:#c4c4c4">%</div>
<div class="t" style="left:993.6px;top:659px;width:8px;overflow:hidden;color:#c4c4c4">с</div>
<div class="t" style="left:1010px;top:659px;width:131.4px;text-align:right;">934,00</div>
<div class="t" style="left:1160.3px;top:659px;width:17px;overflow:hidden;">1</div>
<div class="t" style="left:1178px;top:659px;width:125.4px;text-align:right;">100,07</div>
<div class="t" style="left:1322.6px;top:659px;width:6.2px;overflow:hidden">9</div>
<div class="t" style="left:1348.3px;top:659px;width:150px;overflow:hidden;"></div>
<div class="a" style="left:37px;top:720px;width:1461px;height:1px;background:#e3e3e6"></div>
<div class="a" style="left:37px;top:686px;width:56px;height:33px;background:#fff2c6"></div>
<div class="a" style="left:94px;top:686px;width:226px;height:33px;background:#fff2c6"></div>
<div class="a" style="left:322px;top:686px;width:25px;height:33px;background:#fff2c6"></div>
<div class="a" style="left:348px;top:686px;width:26px;height:33px;background:#fff2c6"></div>
<div class="a" style="left:375px;top:686px;width:24px;height:33px;background:#fff2c6"></div>
<div class="a" style="left:400px;top:686px;width:163px;height:33px;background:#fff2c6"></div>
<div class="a" style="left:564px;top:686px;width:63px;height:33px;background:#fff2c6"></div>
<div class="a" style="left:628px;top:686px;width:139px;height:33px;background:#fff2c6"></div>
<div class="a" style="left:768px;top:686px;width:140px;height:33px;background:#fff2c6"></div>
<div class="a" style="left:909px;top:686px;width:49px;height:33px;background:#fff2c6"></div>
<div class="a" style="left:959px;top:686px;width:51px;height:33px;background:#fff2c6"></div>
<div class="a" style="left:1011px;top:686px;width:139px;height:33px;background:#fff2c6"></div>
<div class="a" style="left:1151px;top:686px;width:27px;height:33px;background:#fff2c6"></div>
<div class="a" style="left:1179px;top:686px;width:133px;height:33px;background:#fff2c6"></div>
<div class="a" style="left:1313px;top:686px;width:24px;height:33px;background:#fff2c6"></div>
<div class="a" style="left:1338px;top:686px;width:160px;height:33px;background:#fff2c6"></div>
<div class="a" style="left:38px;top:687px;width:55px;height:32px;background:#ffe792;border:2px solid #fbc51e"></div>
<div class="t" style="left:36px;top:693px;width:48.5px;text-align:right;">7</div>
<div class="t" style="left:103.3px;top:693px;width:217px;overflow:hidden;">Гайка М4</div>
<div class="t" style="left:331.8px;top:693px;font-size:12px;line-height:21px;color:#666">&lt;</div>
<div class="t" style="left:358.2px;top:693px;font-size:12px;line-height:21px;color:#666">&lt;</div>
<div class="t" style="left:399px;top:693px;width:155.5px;text-align:right;">2 000,000</div>
<div class="t" style="left:573.3px;top:693px;width:53px;overflow:hidden;">шт</div>
<div class="t" style="left:627px;top:693px;width:131.5px;text-align:right;"></div>
<div class="t" style="left:767px;top:693px;width:132.4px;text-align:right;">5,00</div>
<div class="t" style="left:918.5px;top:693px;width:5.8px;overflow:hidden;color:#a8a39a">%</div>
<div class="t" style="left:943.3px;top:693px;width:8px;overflow:hidden;color:#a8a39a">с</div>
<div class="t" style="left:969px;top:693px;width:5.8px;overflow:hidden;color:#a8a39a">%</div>
<div class="t" style="left:993.6px;top:693px;width:8px;overflow:hidden;color:#a8a39a">с</div>
<div class="t" style="left:1010px;top:693px;width:131.4px;text-align:right;">10 000,00</div>
<div class="t" style="left:1160.3px;top:693px;width:17px;overflow:hidden;">1</div>
<div class="t" style="left:1178px;top:693px;width:125.4px;text-align:right;">1 071,43</div>
<div class="t" style="left:1322.6px;top:693px;width:6.2px;overflow:hidden">1</div>
<div class="t" style="left:1348.3px;top:693px;width:150px;overflow:hidden;"></div>
<div class="a" style="left:322px;top:477px;width:1px;height:244px;background:#c6c6c6"></div>
<div class="a" style="left:62px;top:807px;width:1411px;height:10px;border-radius:5px;background:#ccc"></div>
<div class="a" style="left:62px;top:807px;width:798px;height:10px;border-radius:5px;background:#9e9e9e"></div>
<div class="a" style="left:48px;top:809px;width:0;height:0;border-top:3px solid transparent;border-bottom:3px solid transparent;border-right:4px solid #c8c8c8"></div>
<div class="a" style="left:1483.6px;top:809px;width:0;height:0;border-top:3px solid transparent;border-bottom:3px solid transparent;border-left:4px solid #333"></div>
<div class="a" style="left:23px;top:848px;width:588px;height:90px;border:1px solid #a6a6a6;border-radius:4px 0 0 0;background:#fff"></div>
<div class="t " style="left:29.5px;top:851px;color:#b4b4b4">Комментарий</div>
<div class="a" style="left:610px;top:848px;width:25px;height:28px;border:1px solid #a6a6a6;border-radius:0 4px 4px 0;background:#fff;text-align:center;line-height:26px;font-size:11px;color:#666">...</div>
<div class="t " style="left:978px;top:857px;">Скидка руч., %:</div>
<div class="t " style="left:978px;top:896px;">Скидка руч., Σ:</div>
<div class="inp" style="left:1103px;top:854px;width:159px;height:27px;"><span class="v" style=""></span><i class="s" style="left:132px"></i><svg width="11" height="13" viewBox="0 0 11 13" style="left:139.5px;top:5.2px"><rect x="0.6" y="0.6" width="9.8" height="11.8" rx="0.6" fill="#f4f4f4" stroke="#555" stroke-width="1.2"/><rect x="1.2" y="1.2" width="8.6" height="2.2" fill="#8c8c8c"/><rect x="2.2" y="5" width="1.6" height="1.6" fill="#9a9a9a"/><rect x="4.6" y="5" width="1.6" height="1.6" fill="#9a9a9a"/><rect x="7" y="5" width="1.8" height="1.6" fill="#9a9a9a"/><rect x="2.2" y="7.4" width="1.6" height="1.6" fill="#9a9a9a"/><rect x="4.6" y="7.4" width="1.6" height="1.6" fill="#9a9a9a"/><rect x="2.2" y="9.6" width="1.6" height="1.4" fill="#666"/><rect x="4.6" y="9.6" width="1.6" height="1.4" fill="#666"/><rect x="7" y="7.4" width="1.8" height="3.6" fill="#666"/></svg><span class="a" style="right:29px;top:2px;line-height:20px">0,00</span></div>
<div class="inp" style="left:1103px;top:892px;width:159px;height:28px;"><span class="v" style=""></span><i class="s" style="left:132px"></i><svg width="11" height="13" viewBox="0 0 11 13" style="left:139.5px;top:5.2px"><rect x="0.6" y="0.6" width="9.8" height="11.8" rx="0.6" fill="#f4f4f4" stroke="#555" stroke-width="1.2"/><rect x="1.2" y="1.2" width="8.6" height="2.2" fill="#8c8c8c"/><rect x="2.2" y="5" width="1.6" height="1.6" fill="#9a9a9a"/><rect x="4.6" y="5" width="1.6" height="1.6" fill="#9a9a9a"/><rect x="7" y="5" width="1.8" height="1.6" fill="#9a9a9a"/><rect x="2.2" y="7.4" width="1.6" height="1.6" fill="#9a9a9a"/><rect x="4.6" y="7.4" width="1.6" height="1.6" fill="#9a9a9a"/><rect x="2.2" y="9.6" width="1.6" height="1.4" fill="#666"/><rect x="4.6" y="9.6" width="1.6" height="1.4" fill="#666"/><rect x="7" y="7.4" width="1.8" height="3.6" fill="#666"/></svg><span class="a" style="right:29px;top:3px;line-height:20px">0,00</span></div>
<div class="a" style="left:1286px;top:848px;width:226px;height:80px;background:#dcdcdc"></div>
<div class="t " style="left:1292px;top:857px;">НДС:</div>
<div class="t " style="left:1292px;top:896px;">Всего:</div>
<div class="a" style="left:1349px;top:854px;width:157px;height:27px;border:1px solid #cdcdcd;border-top-color:#b4b4b4;border-radius:4px;background:#dfdfdf"></div>
<div class="t " style="left:1349px;top:857px;width:151px;text-align:right">951 951,21</div>
<div class="a" style="left:1349px;top:892px;width:157px;height:28px;border:1px solid #cdcdcd;border-top-color:#b4b4b4;border-radius:4px;background:#dfdfdf"></div>
<div class="t " style="left:1349px;top:896px;width:151px;text-align:right">8 884 878,00</div>
</body></html>
